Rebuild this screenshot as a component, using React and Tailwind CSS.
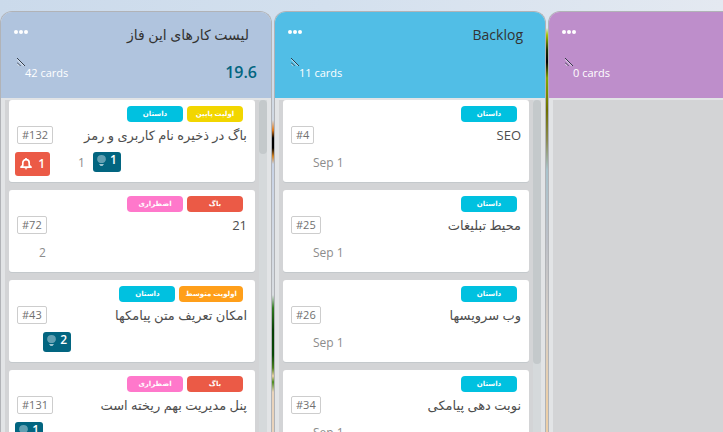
import React from "react";

const tagColors = {
  cyan: "bg-[#00c1e0]",
  yellow: "bg-[#f2d600]",
  pink: "bg-[#ff78cb]",
  red: "bg-[#eb5a46]",
  orange: "bg-[#ff9f1a]",
};

const story = { text: "داستان", color: "cyan" };
const bug = { text: "باگ", color: "red" };
const urgent = { text: "اضطراری", color: "pink" };

const columns = [
  {
    title: "لیست کارهای این فاز",
    count: "42 cards",
    points: "19.6",
    head: "bg-[#b0c4de]",
    thumb: "h-[54px]",
    cards: [
      {
        id: "#132",
        title: "باگ در ذخیره نام کاربری و رمز",
        tags: [{ text: "اولیت پایین", color: "yellow" }, story],
        alerts: 1,
        comments: 1,
        points: 1,
      },
      { id: "#72", title: "21", tags: [bug, urgent], comments: 2 },
      {
        id: "#43",
        title: "امکان تعریف متن پیامکها",
        tags: [{ text: "اولویت متوسط", color: "orange" }, story],
        indent: true,
        points: 2,
      },
      { id: "#131", title: "پنل مدیریت بهم ریخته است", tags: [bug, urgent], points: 1 },
    ],
  },
  {
    title: "Backlog",
    count: "11 cards",
    head: "bg-[#51bee6]",
    thumb: "h-[264px]",
    cards: [
      { id: "#4", title: "SEO", tags: [story], due: "Sep 1" },
      { id: "#25", title: "محیط تبلیغات", tags: [story], due: "Sep 1" },
      { id: "#26", title: "وب سرویسها", tags: [story], due: "Sep 1" },
      { id: "#34", title: "نوبت دهی پیامکی", tags: [story], due: "Sep 1" },
    ],
  },
  { title: "", count: "0 cards", head: "bg-[#be8ecb]", cards: [] },
];

function Bell() {
  return (
    <svg className="h-3 w-3" viewBox="0 0 12 12" fill="none" stroke="white" strokeWidth="1.7" aria-hidden="true">
      <path d="M1 9.2h10L9.2 7.3V5C9.2 3 8 1.7 6 1.7S2.800 3 2.800 5v2.300z" strokeLinejoin="round" />
      <path d="M4.500 10.300h3L6 11.800z" fill="white" stroke="none" />
      <path d="M6 0v2" />
    </svg>
  );
}

function Bulb() {
  return (
    <svg className="mt-[3px] h-3 w-[9px]" viewBox="0 0 9 12" aria-hidden="true">
      <path d="M4.500 0A4.400 4.400 0 0 0 .100 4.200C.100 6.400 2.200 8 3.300 8h2.400C6.800 8 8.900 6.400 8.900 4.200A4.400 4.400 0 0 0 4.500 0z" fill="#62a0b2" />
      <path d="M2 9h5L5.500 11h-2z" fill="#9cc5d0" />
    </svg>
  );
}

function Dots() {
  return (
    <svg className="h-4 w-4" viewBox="0 0 16 16" fill="white" aria-hidden="true">
      <circle cx="3" cy="8" r="2" />
      <circle cx="8" cy="8" r="2" />
      <circle cx="13" cy="8" r="2" />
    </svg>
  );
}

function Hatch() {
  return (
    <svg className="h-2 w-2" viewBox="0 0 8 8" fill="none" aria-hidden="true">
      <path d="M0 0l8 8M0 4.500l3.500 3.500" stroke="#26303c" strokeWidth="0.9" />
      <path d="M0 1.300l6.700 6.700M0 5.600l2.400 2.400" stroke="white" strokeWidth="0.7" />
    </svg>
  );
}

function Card({ card }) {
  return (
    <article className="h-[82px] shrink-0 rounded-[3px] bg-white px-2 pt-[6px] shadow-[0_1px_0_#c4c9cc]">
      <ul dir="rtl" className="flex gap-1 px-1">
        {card.tags.map((tag) => (
          <li
            key={tag.text}
            className={`h-4 min-w-[56px] rounded-[4px] px-[6px] text-center text-[7px] leading-[15px] font-bold text-white ${tagColors[tag.color]}`}
          >
            {tag.text}
          </li>
        ))}
      </ul>
      <div className="mt-1 flex items-start justify-between">
        <span className="h-[18px] rounded-[2px] border border-[#cdcdcd] px-1 text-[11px] leading-[15px] text-[#707070]">
          {card.id}
        </span>
        <h3 dir="auto" className="text-[13px] leading-[18px] text-[#4d4d4d]">
          {card.title}
        </h3>
      </div>
      <div className="mt-2 -ml-[2px] flex h-6 items-start text-[12px] text-[#8c8c8c]">
        {card.alerts && (
          <span className="mr-1 flex h-6 w-[35px] items-center justify-between rounded-[3px] bg-[#eb5a46] px-[5px] leading-[20px] font-semibold text-white">
            <Bell />
            {card.alerts}
          </span>
        )}
        {card.comments && <span className="mr-2 ml-6 leading-[22px]">{card.comments}</span>}
        {card.due && <time className="ml-6 leading-[22px]">{card.due}</time>}
        {card.points && (
          <span
            className={`flex h-5 w-7 items-start justify-between rounded-[3px] bg-[#026580] px-1 leading-[16px] font-semibold text-white ${card.indent ? "ml-7" : ""}`}
          >
            <Bulb />
            {card.points}
          </span>
        )}
      </div>
    </article>
  );
}

function Column({ column }) {
  return (
    <section className="flex w-[272px] shrink-0 flex-col overflow-hidden rounded-t-[12px] border border-b-0 border-[#b1b3b7] bg-[#e2e4e6]">
      <header className={`flex h-[86px] shrink-0 flex-col justify-between pt-3 pr-[14px] pb-[18px] pl-3 ${column.head}`}>
        <div className="flex items-start justify-between">
          <button type="button" aria-label="List menu">
            <Dots />
          </button>
          <h2 dir="auto" className="mr-2 text-[14px] leading-[22px] font-medium text-[#333]">
            {column.title}
          </h2>
        </div>
        <div className="flex items-end justify-between">
          <div className="flex flex-col pl-1">
            <Hatch />
            <span className="pl-2 text-[11px] leading-[14px] font-medium text-white">{column.count}</span>
          </div>
          <span className="text-[16px] leading-4 font-semibold text-[#026580]">{column.points}</span>
        </div>
      </header>
      <div className="mx-1 mt-[2px] flex min-h-0 flex-1 overflow-hidden bg-[#d3d4d6]">
        <div className="flex flex-1 flex-col gap-2 px-1">
          {column.cards.map((card) => (
            <Card key={card.id} card={card} />
          ))}
        </div>
        {column.thumb && (
          <div className="w-2 bg-[#d5d9db]">
            <div className={`w-2 rounded-[4px] bg-[#c4c9cb] ${column.thumb}`} />
          </div>
        )}
      </div>
    </section>
  );
}

export default function App() {
  return (
    <main className="flex h-screen gap-[2px] overflow-hidden bg-[#d5e0ec] bg-[linear-gradient(90deg,#cbdaeb,#d3e0ee_45%,#e4e9f1),linear-gradient(#d5e0ec_0,#d5e0ec_28px,#d0d8e2_120px,#e07818_130px,#000_138px,#000_148px,#d08020_156px,#c8d3e6_164px,#d8dce0_295px,#2f7a20_308px,#063f06_330px,#064806_355px,#4a8020_368px,#e8d0a8_376px,#4a8a20_382px,#e9d3bb_392px,#e9d3bb_100%),linear-gradient(#dfe6ef_0,#dce4ee_28px,#a8c400_35px,#1c3000_50px,#000_62px,#86a800_78px,#6f7000_110px,#8a8a50_140px,#a9c3cc_170px,#bcc0c8_240px,#d8cfc5_330px,#eccfa8_400px,#eccfa8_100%)] bg-[size:100%_28px,410px_100%,100%_100%] bg-no-repeat pt-[11px] font-['Open_Sans','DejaVu_Sans',sans-serif]">
      {columns.map((column) => (
        <Column key={column.count} column={column} />
      ))}
    </main>
  );
}
